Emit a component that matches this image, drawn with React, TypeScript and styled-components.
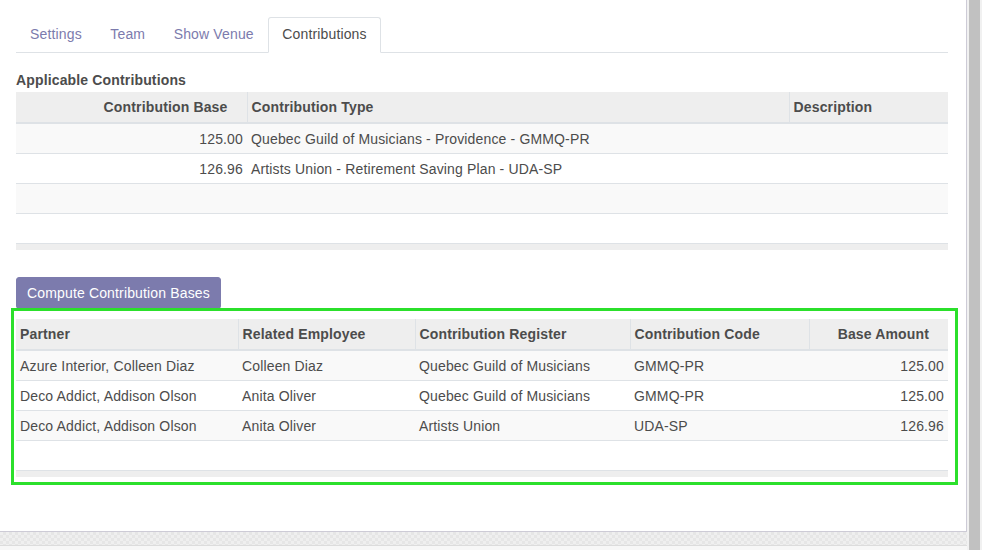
import React from 'react'
import styled, { createGlobalStyle } from 'styled-components'

const GlobalStyle = createGlobalStyle`
  html, body {
    margin: 0;
    padding: 0;
    background: #fff;
  }
  body {
    font-family: "Liberation Sans", Arial, sans-serif;
    font-size: 14px;
    letter-spacing: 0.15px;
    color: #4c4c4c;
  }
`

const tabs = ['Settings', 'Team', 'Show Venue', 'Contributions']

const applicable = [
  { base: '125.00', type: 'Quebec Guild of Musicians - Providence - GMMQ-PR', description: '' },
  { base: '126.96', type: 'Artists Union - Retirement Saving Plan - UDA-SP', description: '' },
]

const bases = [
  { partner: 'Azure Interior, Colleen Diaz', employee: 'Colleen Diaz', register: 'Quebec Guild of Musicians', code: 'GMMQ-PR', amount: '125.00' },
  { partner: 'Deco Addict, Addison Olson', employee: 'Anita Oliver', register: 'Quebec Guild of Musicians', code: 'GMMQ-PR', amount: '125.00' },
  { partner: 'Deco Addict, Addison Olson', employee: 'Anita Oliver', register: 'Artists Union', code: 'UDA-SP', amount: '126.96' },
]

const Frame = styled.div`
  display: flex;
  width: 982px;
  height: 550px;
  overflow: hidden;
`

const Main = styled.div`
  flex: 1;
  display: flex;
  flex-direction: column;
`

const Sheet = styled.div`
  height: 532px;
  box-sizing: border-box;
  background: #fff;
  border-right: 1px solid #cdcbd6;
  border-bottom: 1px solid #cdcbd6;
  padding: 17px 18px 0 16px;
  display: flex;
  flex-direction: column;
`

const Checker = styled.div`
  height: 13px;
  background: repeating-conic-gradient(#e6e6e6 0 25%, #efefef 0 50%) 0 0 / 6px 6px;
  border-bottom: 1px solid #dcdcdc;
`

const BottomStrip = styled.div`
  flex: 1;
  background: #f7f7f7;
`

const ScrollTrack = styled.div`
  width: 15px;
  background: #f1f1f1;
  display: flex;
  justify-content: center;
`

const ScrollThumb = styled.div`
  width: 11px;
  background: #c1c1c1;
`

const TabBar = styled.ul`
  display: flex;
  list-style: none;
  margin: 0;
  padding: 0;
  border-bottom: 1px solid #dee2e6;
`

const Tab = styled.li<{ $active?: boolean }>`
  margin-bottom: -1px;
  padding: 6px 13.5px 8px 13px;
  line-height: 20px;
  border: 1px solid ${p => (p.$active ? '#dee2e6' : 'transparent')};
  border-bottom-color: ${p => (p.$active ? '#fff' : 'transparent')};
  border-radius: 3px 3px 0 0;
  background: ${p => (p.$active ? '#fff' : 'transparent')};
  color: ${p => (p.$active ? '#4c4c4c' : '#7c7bad')};
`

const Label = styled.div`
  margin-top: 17px;
  margin-bottom: 2px;
  line-height: 20px;
  font-weight: bold;
  color: #4c4c4c;
`

const Table = styled.table`
  width: 932px;
  table-layout: fixed;
  border-collapse: collapse;
  border-spacing: 0;
`

const Th = styled.th<{ $num?: boolean }>`
  height: 31px;
  padding: 0 ${p => (p.$num ? '19px' : '4px')} 0 4px;
  background: #eeeeee;
  border-bottom: 2px solid #dee2e6;
  border-left: 1px solid #dee2e6;
  text-align: ${p => (p.$num ? 'right' : 'left')};
  font-weight: bold;
  color: #4c4c4c;
  white-space: nowrap;
  box-sizing: border-box;

  &:first-child {
    border-left: none;
  }
`

const Row = styled.tr`
  &:nth-child(odd) {
    background: #f9f9f9;
  }
`

const Td = styled.td<{ $num?: boolean }>`
  height: 29px;
  padding: 0 4px;
  border-bottom: 1px solid #dee2e6;
  text-align: ${p => (p.$num ? 'right' : 'left')};
  color: #4c4c4c;
  white-space: nowrap;
  overflow: hidden;
`

const FootCell = styled.td`
  height: 6px;
  padding: 0;
  background: #eeeeee;
`

const ComputeButton = styled.button`
  align-self: flex-start;
  margin-top: 27px;
  margin-bottom: 10px;
  height: 32px;
  padding: 0 10px;
  border: 1px solid #7c7bad;
  border-radius: 3px;
  background: #7c7bad;
  color: #fff;
  font-family: "Liberation Sans", Arial, sans-serif;
  font-size: 14px;
  letter-spacing: 0.15px;
  line-height: 20px;
`

const Highlighted = styled.div`
  position: relative;
`

const HighlightRing = styled.div`
  position: absolute;
  top: -11px;
  left: -5px;
  right: -10px;
  bottom: -8px;
  border: 3px solid #2be02b;
  pointer-events: none;
`

const EmptyRows = ({ count, cols }: { count: number; cols: number }) => (
  <>
    {Array.from({ length: count }).map((_, i) => (
      <Row key={'e' + i}>
        {Array.from({ length: cols }).map((__, j) => (
          <Td key={j} />
        ))}
      </Row>
    ))}
  </>
)

export default function App() {
  return (
    <>
      <GlobalStyle />
      <Frame>
        <Main>
          <Sheet>
            <TabBar>
              {tabs.map(t => (
                <Tab key={t} $active={t === 'Contributions'}>{t}</Tab>
              ))}
            </TabBar>

            <Label>Applicable Contributions</Label>
            <Table>
              <colgroup>
                <col style={{ width: 231 }} />
                <col style={{ width: 542 }} />
                <col style={{ width: 159 }} />
              </colgroup>
              <thead>
                <tr>
                  <Th $num>Contribution Base</Th>
                  <Th>Contribution Type</Th>
                  <Th>Description</Th>
                </tr>
              </thead>
              <tbody>
                {applicable.map((a, i) => (
                  <Row key={i}>
                    <Td $num>{a.base}</Td>
                    <Td>{a.type}</Td>
                    <Td>{a.description}</Td>
                  </Row>
                ))}
                <EmptyRows count={2} cols={3} />
              </tbody>
              <tfoot>
                <tr>
                  <FootCell colSpan={3} />
                </tr>
              </tfoot>
            </Table>

            <ComputeButton>Compute Contribution Bases</ComputeButton>

            <Highlighted>
              <Table>
                <colgroup>
                  <col style={{ width: 222 }} />
                  <col style={{ width: 177 }} />
                  <col style={{ width: 215 }} />
                  <col style={{ width: 179 }} />
                  <col style={{ width: 139 }} />
                </colgroup>
                <thead>
                  <tr>
                    <Th>Partner</Th>
                    <Th>Related Employee</Th>
                    <Th>Contribution Register</Th>
                    <Th>Contribution Code</Th>
                    <Th $num>Base Amount</Th>
                  </tr>
                </thead>
                <tbody>
                  {bases.map((b, i) => (
                    <Row key={i}>
                      <Td>{b.partner}</Td>
                      <Td>{b.employee}</Td>
                      <Td>{b.register}</Td>
                      <Td>{b.code}</Td>
                      <Td $num>{b.amount}</Td>
                    </Row>
                  ))}
                  <EmptyRows count={1} cols={5} />
                </tbody>
                <tfoot>
                  <tr>
                    <FootCell colSpan={5} />
                  </tr>
                </tfoot>
              </Table>
              <HighlightRing />
            </Highlighted>
          </Sheet>
          <Checker />
          <BottomStrip />
        </Main>
        <ScrollTrack>
          <ScrollThumb />
        </ScrollTrack>
      </Frame>
    </>
  )
}
